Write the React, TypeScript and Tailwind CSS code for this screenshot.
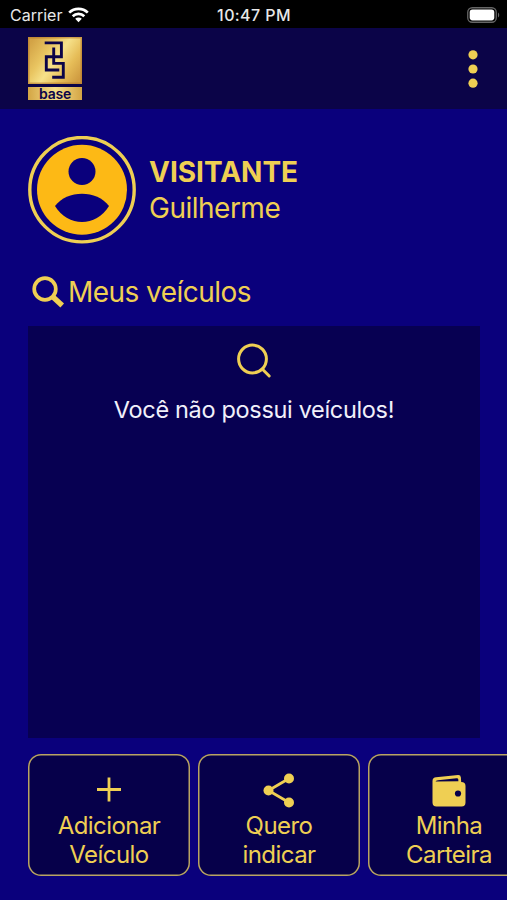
import { ReactNode } from 'react'

const GOLD = '#efcf53'

function WifiIcon() {
  return (
    <svg width="21" height="16" viewBox="0 0 21 16" fill="none" stroke="#fff" strokeWidth="2.7">
      <path d="M1.2 5.6a13.3 13.3 0 0 1 18.6 0" />
      <path d="M4.7 9.2a8.3 8.3 0 0 1 11.6 0" />
      <path d="M10.5 15.2 7.2 11.8a4.7 4.7 0 0 1 6.6 0z" fill="#fff" stroke="none" />
    </svg>
  )
}

function BatteryIcon() {
  return (
    <svg width="33" height="16" viewBox="0 0 33 16">
      <rect x="0.75" y="0.75" width="28.5" height="14.5" rx="4.5" fill="none" stroke="#666" strokeWidth="1.3" />
      <rect x="2.7" y="2.6" width="24.6" height="10.8" rx="2.8" fill="#fff" />
      <path d="M31 5.5c1.6.8 1.6 4.2 0 5z" fill="#666" />
    </svg>
  )
}

function Logo() {
  return (
    <div className="flex w-[54px] flex-col gap-[3px]">
      <svg width="54" height="47" viewBox="0 0 54 47">
        <defs>
          <linearGradient id="ouro" x1="0" y1="0.2" x2="1" y2="0.8">
            <stop offset="0" stopColor="#d3a346" />
            <stop offset="0.3" stopColor="#e9c561" />
            <stop offset="0.5" stopColor="#f6e18a" />
            <stop offset="0.75" stopColor="#e6bd58" />
            <stop offset="1" stopColor="#cf9b41" />
          </linearGradient>
        </defs>
        <rect width="54" height="47" fill="url(#ouro)" />
        <rect x="0.75" y="0.75" width="52.5" height="45.5" fill="none" stroke="#b5792c" strokeOpacity="0.6" strokeWidth="1.5" />
        <g fill="none" stroke="#0b0448" strokeWidth="2.9">
          <path d="M16.7 5.9H33.4V19.7H18.3V33H31.3" />
          <path d="M25.7 10.5V26.4H35.3V40.3H24.2" />
        </g>
      </svg>
      <div className="flex h-[13px] items-center justify-center bg-linear-to-r from-[#d3a544] via-[#f7e08a] to-[#d3a544] text-[14px] leading-[18px] font-semibold tracking-[-0.2px] text-[#0b0448]">
        base
      </div>
    </div>
  )
}

function Avatar() {
  return (
    <svg width="108" height="108" viewBox="0 0 108 108" className="shrink-0">
      <circle cx="54" cy="53.7" r="52.2" fill="none" stroke={GOLD} strokeWidth="3.4" />
      <circle cx="54" cy="53.7" r="45" fill="#fdb915" />
      <circle cx="54" cy="35.5" r="13.5" fill="#0a007c" />
      <path d="M27 70C39 53.5 69 53.5 81 70C68 91.3 40 91.3 27 70Z" fill="#0a007c" />
    </svg>
  )
}

interface CardProps {
  icon: ReactNode
  linha1: string
  linha2: string
}

function AcaoCard({ icon, linha1, linha2 }: CardProps) {
  return (
    <button className="flex h-[122px] w-[162px] shrink-0 flex-col items-center rounded-[13px] bg-[#06004a] pt-[19px] text-[24px] leading-[29px] tracking-[-0.55px] text-[#efcf53] inset-ring-[1.5px] inset-ring-[#b8a363]">
      <span className="flex h-[38px] items-start justify-center">{icon}</span>
      <span>{linha1}</span>
      <span>{linha2}</span>
    </button>
  )
}

export default function App() {
  return (
    <div className="flex h-[900px] w-[507px] flex-col overflow-hidden bg-[#0a007c] font-['Inter','Liberation_Sans',sans-serif] text-[#efcf53]">
      {/* Barra de status */}
      <div className="grid h-[28px] shrink-0 grid-cols-3 items-center bg-black pt-px pr-[7px] pl-[10px] text-[16px] text-[#e8e8e8]">
        <div className="flex items-center gap-[6px]">
          <span>Carrier</span>
          <WifiIcon />
        </div>
        <span className="pr-[2px] text-center font-medium tracking-[0.4px]">10:47 PM</span>
        <div className="flex justify-end">
          <BatteryIcon />
        </div>
      </div>

      <header className="flex h-[81px] shrink-0 items-center justify-between bg-[#0b0448] pr-[29px] pl-[28px]">
        <Logo />
        <svg width="10" height="38" viewBox="0 0 10 38" fill={GOLD}>
          <circle cx="5" cy="4.8" r="4.6" />
          <circle cx="5" cy="19" r="4.6" />
          <circle cx="5" cy="33.2" r="4.6" />
        </svg>
      </header>

      <main className="flex flex-col pt-[27px] pl-[28px]">
        <div className="flex items-center gap-[13px]">
          <Avatar />
          <div className="flex flex-col text-[28px] leading-[36px]">
            <span className="font-bold">VISITANTE</span>
            <span className="tracking-[-0.5px]">Guilherme</span>
          </div>
        </div>

        <div className="mt-[29px] flex h-[38px] items-center gap-[3px] pl-[4px]">
          <svg width="33" height="33" viewBox="0 0 33 33" fill="none" stroke={GOLD}>
            <circle cx="13" cy="13" r="10.8" strokeWidth="3.7" />
            <path d="M20.5 20.5l9.7 9" strokeWidth="5.4" />
          </svg>
          <h2 className="text-[28px] leading-[36px] tracking-[-0.55px]">Meus veículos</h2>
        </div>

        <section className="mt-[15px] flex h-[412px] w-[452px] flex-col items-center bg-[#070052] pt-[17px]">
          <svg width="36" height="36" viewBox="0 0 36 36" fill="none" stroke={GOLD} strokeWidth="3">
            <circle cx="16.5" cy="16" r="13.9" />
            <path d="M26.2 26l7 7" strokeLinecap="round" />
          </svg>
          <p className="mt-[16px] text-[23.5px] leading-[30px] tracking-[-0.33px] text-[#f1f0fa]">Você não possui veículos!</p>
        </section>

        <div className="mt-[16px] flex gap-[8px]">
          <AcaoCard
            icon={
              <svg width="25" height="35" viewBox="0 0 25 35" stroke={GOLD} strokeWidth="2.8">
                <path d="M12 4.500v24M0 16.500h24" />
              </svg>
            }
            linha1="Adicionar"
            linha2="Veículo"
          />
          <AcaoCard
            icon={
              <svg width="32" height="35" viewBox="0 0 32 35" fill={GOLD}>
                <path d="M26 5.500L5.500 17.500L26 29.500" fill="none" stroke={GOLD} strokeWidth="2.8" />
                <circle cx="26" cy="5.5" r="5" />
                <circle cx="5.5" cy="17.5" r="5" />
                <circle cx="26" cy="29.5" r="5" />
              </svg>
            }
            linha1="Quero"
            linha2="indicar"
          />
          <AcaoCard
            icon={
              <svg width="34" height="35" viewBox="0 0 34 35">
                <path
                  d="M0.5 8C0.5 5.5 2 4.600 4 4.300L26 2.100Q28.600 1.900 28.900 4.500L29.200 9Q33.500 9.200 33.500 13V29.500Q33.500 33.500 29.500 33.500H4.500Q0.500 33.500 0.500 29.500Z"
                  fill={GOLD}
                />
                <path d="M3.5 8.600Q3.800 7.600 6 7.300L24.500 5.200Q26.200 5 26.300 6.500L26.400 8.300Z" fill="#06004a" />
                <circle cx="26" cy="20.5" r="3.1" fill="#06004a" />
              </svg>
            }
            linha1="Minha"
            linha2="Carteira"
          />
        </div>
      </main>
    </div>
  )
}
